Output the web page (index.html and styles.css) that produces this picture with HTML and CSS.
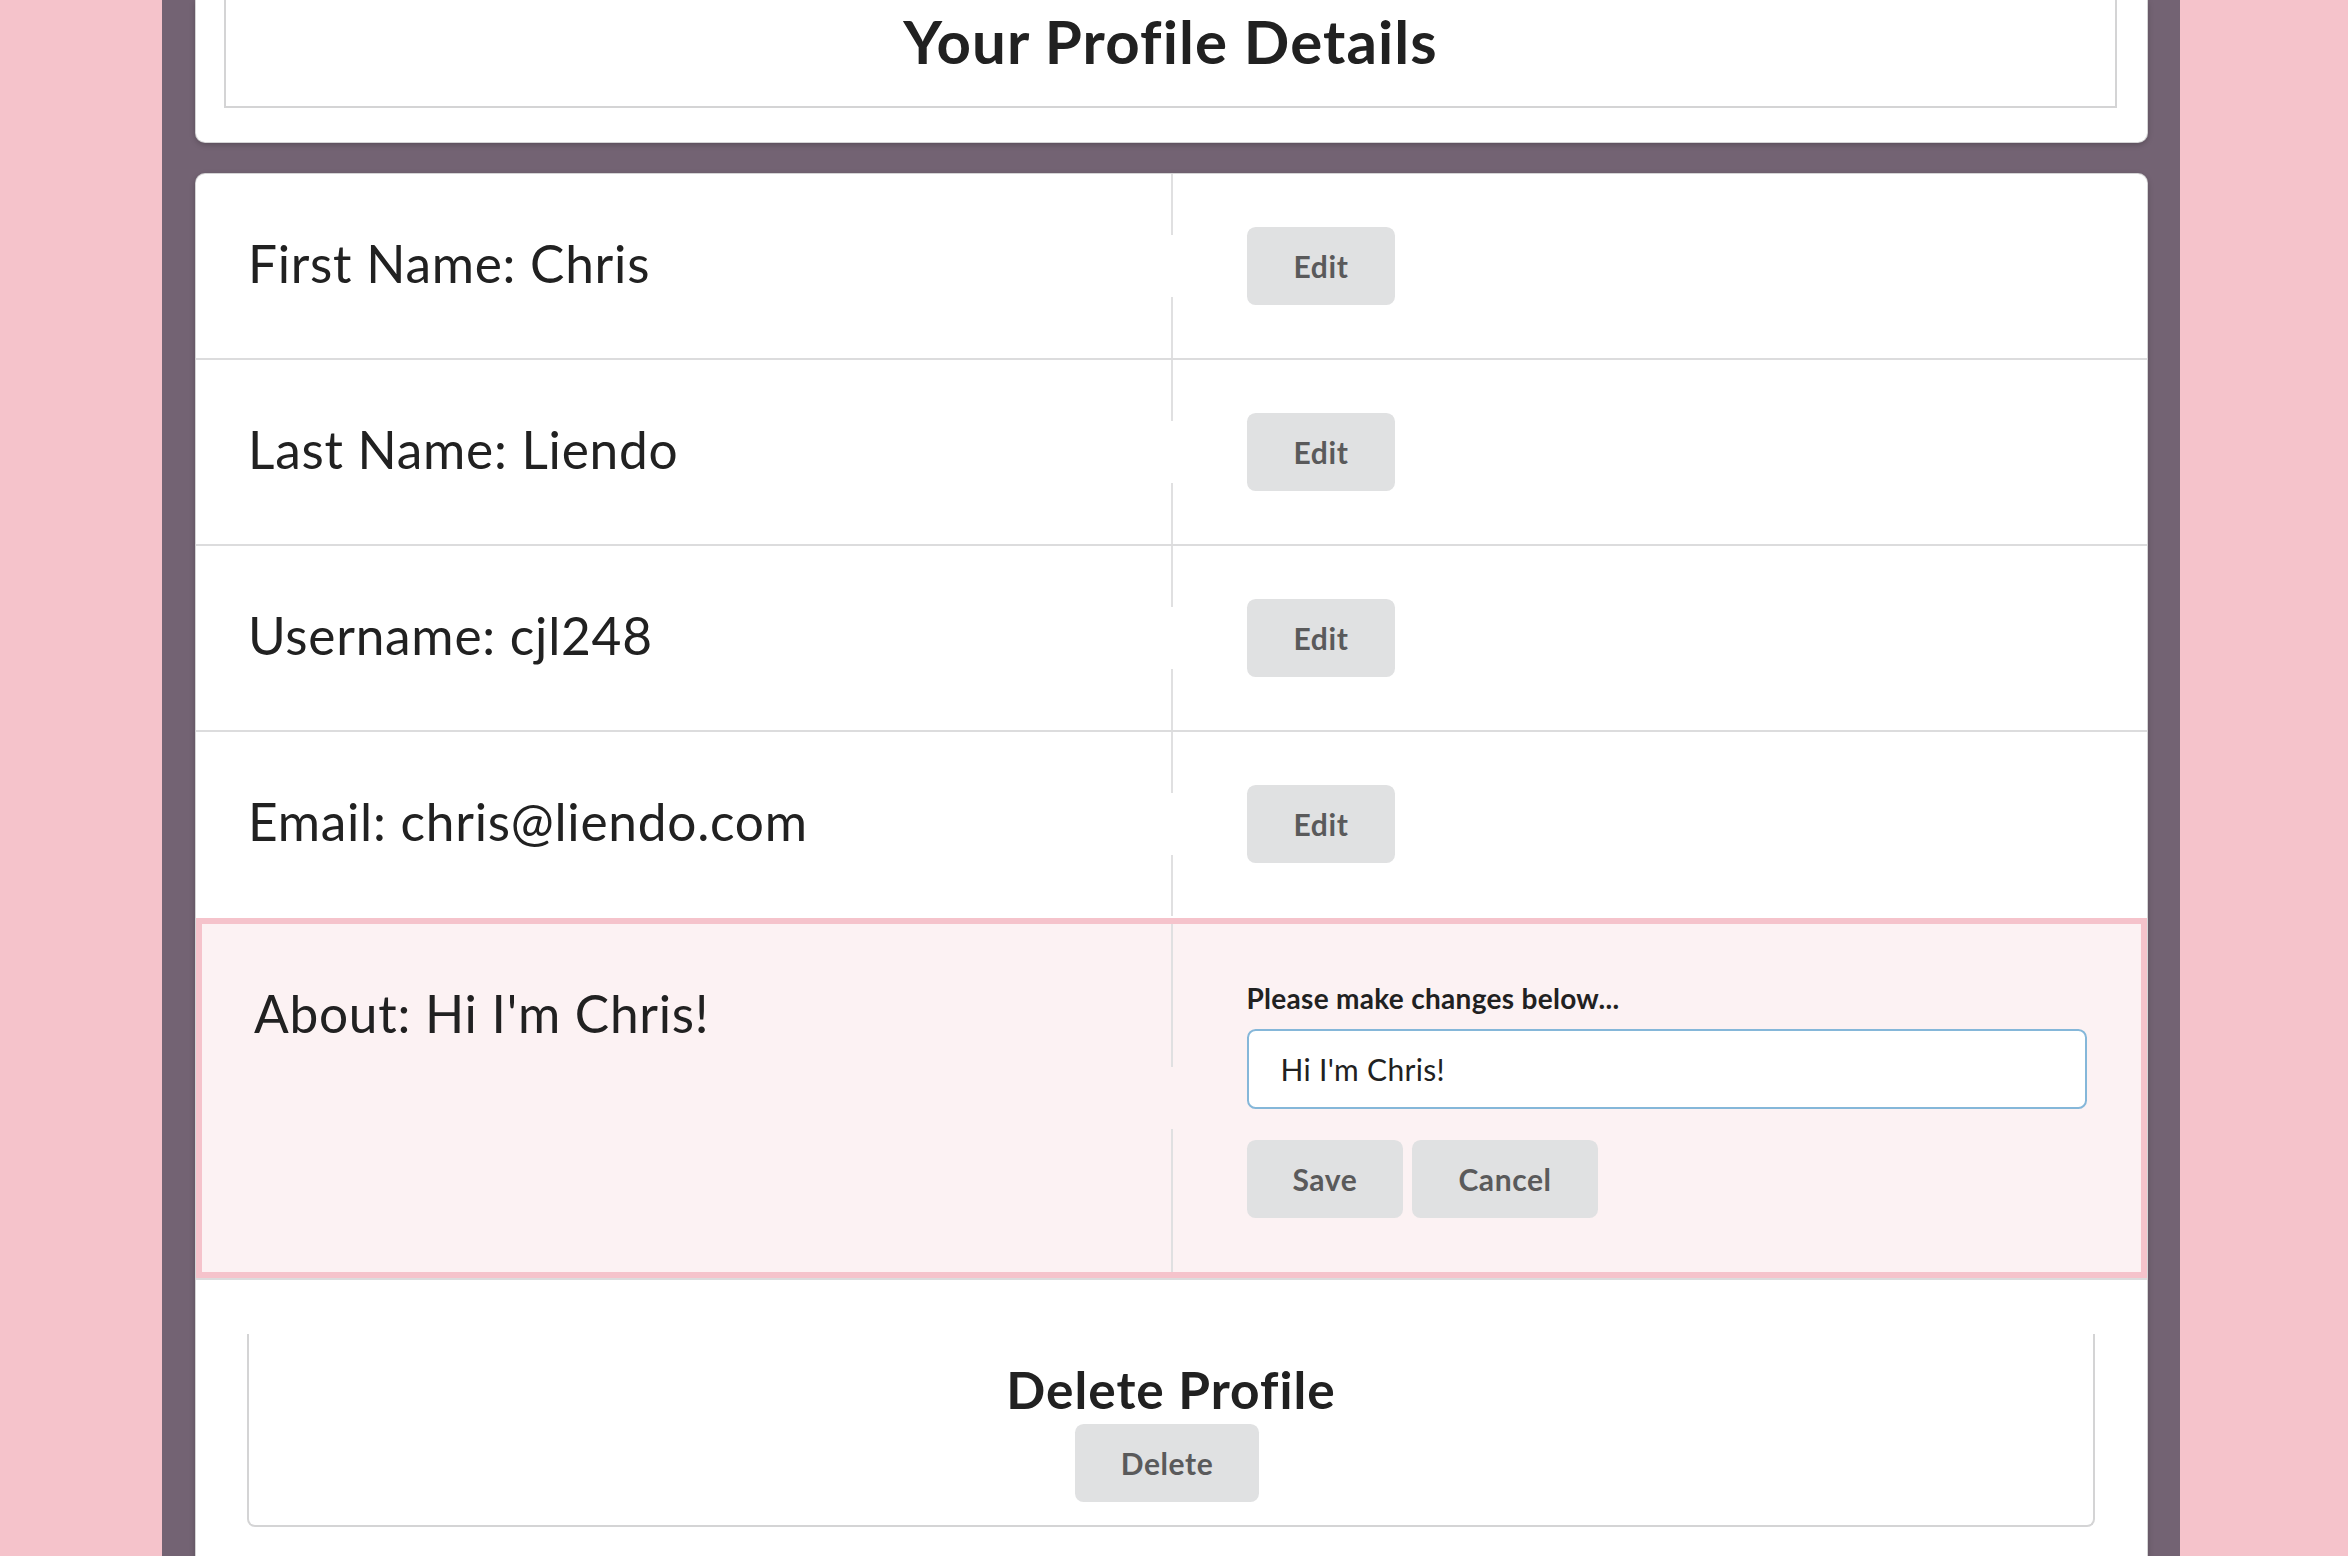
FILE: index.html
```html
<!DOCTYPE html>
<html lang="en">
<head>
<meta charset="utf-8">
<title>Your Profile Details</title>
<link rel="stylesheet" href="styles.css">
</head>
<body>
<div class="page">
  <div class="top-card">
    <div class="title-box">
      <h1 class="title">Your Profile Details</h1>
    </div>
  </div>
  <div class="main-card">
    <div class="field-row">
      <div class="field-label-col"><h2 class="field-text">First Name: Chris</h2></div>
      <div class="field-action-col"><button class="btn">Edit</button></div>
    </div>
    <div class="field-row">
      <div class="field-label-col"><h2 class="field-text">Last Name: Liendo</h2></div>
      <div class="field-action-col"><button class="btn">Edit</button></div>
    </div>
    <div class="field-row">
      <div class="field-label-col"><h2 class="field-text">Username: cjl248</h2></div>
      <div class="field-action-col"><button class="btn">Edit</button></div>
    </div>
    <div class="field-row">
      <div class="field-label-col"><h2 class="field-text">Email: chris@liendo.com</h2></div>
      <div class="field-action-col"><button class="btn">Edit</button></div>
    </div>
    <div class="field-row editing">
      <div class="field-label-col"><h2 class="field-text">About: Hi I'm Chris!</h2></div>
      <div class="field-action-col">
        <label class="edit-label" for="about">Please make changes below...</label>
        <input class="edit-input" id="about" type="text" value="Hi I'm Chris!">
        <div class="edit-buttons">
          <button class="btn">Save</button>
          <button class="btn">Cancel</button>
        </div>
      </div>
    </div>
    <div class="delete-box">
      <h2 class="delete-title">Delete Profile</h2>
      <button class="btn delete-btn">Delete</button>
    </div>
  </div>
</div>
</body>
</html>
```
FILE: styles.css
```css
html, body {
  margin: 0;
  padding: 0;
}
body {
  background: #f5c3cb;
  font-family: Lato, "Open Sans", "Liberation Sans", sans-serif;
  color: #212121;
  overflow: hidden;
}
.page {
  margin-left: 162px;
  width: 2018px;
  box-sizing: border-box;
  padding: 0 33px 0 34px;
  background: #736373;
  min-height: 100vh;
}
.top-card {
  background: #fff;
  border-radius: 0 0 9px 9px;
  padding: 0 30px 34px 28px;
  box-shadow: 0 0 0 1px #d4d4d5, 0 2px 6px rgba(0, 0, 0, 0.28);
}
.title-box {
  border: 2px solid #d4d4d5;
  border-top: none;
  padding: 3px 0 26px;
  text-align: center;
}
.title {
  margin: 0;
  font-size: 60px;
  line-height: 77px;
  font-weight: 700;
  letter-spacing: 1.1px;
  color: #212121;
}
.main-card {
  margin-top: 32px;
  background: #fff;
  border-radius: 9px 9px 0 0;
  padding-bottom: 60px;
  box-shadow: 0 0 0 1px #d4d4d5, 0 2px 6px rgba(0, 0, 0, 0.28);
}
.field-row {
  display: grid;
  grid-template-columns: calc(50% - 1px) 1fr;
}
.field-row + .field-row {
  border-top: 2px solid #dcdcdd;
}
.field-row.editing {
  border: 6px solid #f5c3cb;
  margin-top: 2px;
  background: #fcf2f3;
  box-shadow: 0 2px 0 #dcdcdd;
}
.field-label-col {
  padding: 56px 54px 53px 52px;
}
.field-text {
  margin: 0;
  font-size: 51.4px;
  line-height: 66px;
  font-weight: 400;
  letter-spacing: 0.75px;
  color: #212121;
}
.field-action-col {
  padding: 53px 54px 53px 76px;
  background:
    linear-gradient(#e0e0e1, #e0e0e1) left top / 2px calc(50% - 31px) no-repeat,
    linear-gradient(#e0e0e1, #e0e0e1) left bottom / 2px calc(50% - 31px) no-repeat;
}
.editing .field-action-col {
  padding-top: 54px;
  padding-bottom: 54px;
}
.btn {
  height: 78px;
  padding: 0 46px;
  border: none;
  border-radius: 8.6px;
  background: #e0e1e2;
  color: #5a5a5b;
  font-family: Lato, "Open Sans", "Liberation Sans", sans-serif;
  font-size: 30px;
  font-weight: 700;
  line-height: 30px;
  letter-spacing: 0.6px;
  cursor: pointer;
}
.field-action-col > .btn {
  padding: 0 47px;
}
.edit-label {
  display: block;
  font-size: 28px;
  line-height: 40px;
  font-weight: 700;
  letter-spacing: 0.3px;
  color: #212121;
  margin-bottom: 11px;
}
.edit-input {
  display: block;
  width: 100%;
  height: 80px;
  box-sizing: border-box;
  border: 2px solid #85b7d9;
  border-radius: 8.6px;
  padding: 0 32px;
  background: #fff;
  font-family: Lato, "Open Sans", "Liberation Sans", sans-serif;
  font-size: 30px;
  letter-spacing: 0.3px;
  color: #212121;
  outline: none;
}
.edit-buttons {
  display: flex;
  gap: 9px;
  margin-top: 31px;
}
.delete-box {
  margin: 56px 52px 0 51px;
  border: 2px solid #d4d4d5;
  border-top: none;
  border-radius: 0 0 8px 8px;
  padding: 22px 0 23px;
  text-align: center;
}
.delete-title {
  margin: 0 0 2px;
  font-size: 51.4px;
  line-height: 66px;
  font-weight: 700;
  letter-spacing: 1px;
  color: #212121;
}
.delete-btn {
  margin-right: 8px;
}
```
